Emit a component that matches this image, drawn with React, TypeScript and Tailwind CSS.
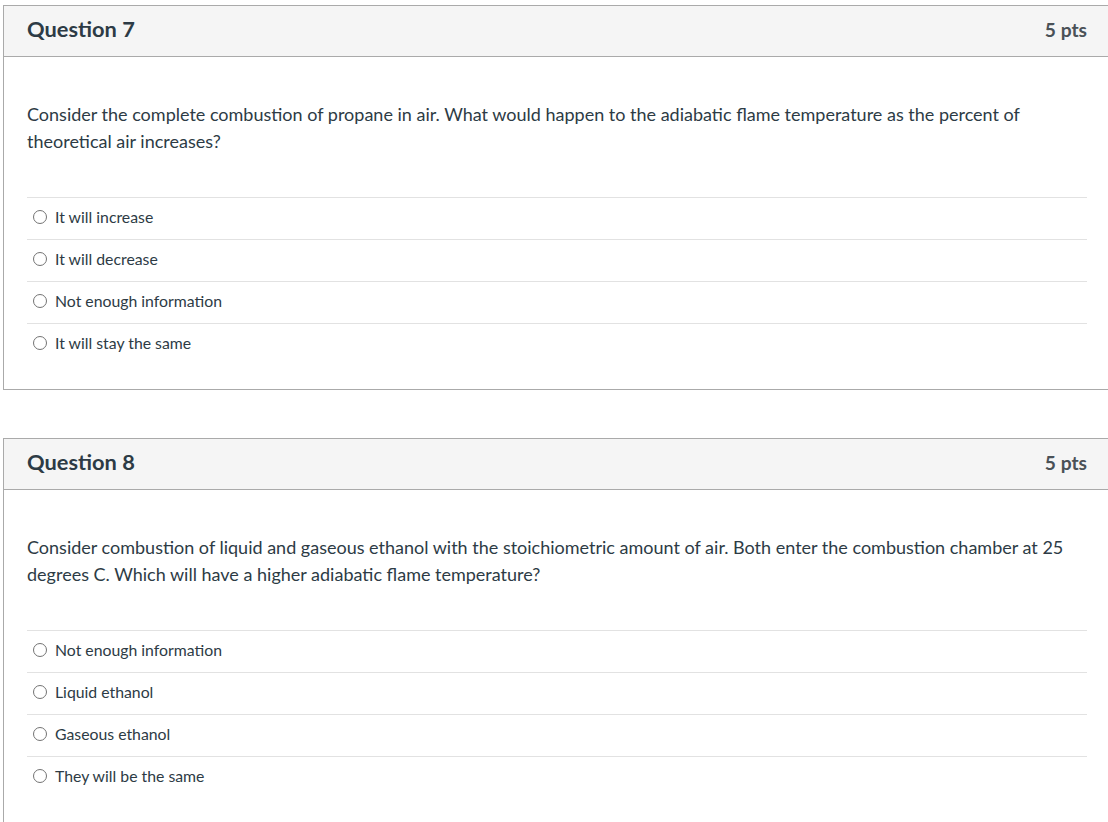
const QUESTIONS = [
  {
    id: 7,
    points: 5,
    text: 'Consider the complete combustion of propane in air. What would happen to the adiabatic flame temperature as the percent of theoretical air increases?',
    answers: ['It will increase', 'It will decrease', 'Not enough information', 'It will stay the same'],
  },
  {
    id: 8,
    points: 5,
    text: 'Consider combustion of liquid and gaseous ethanol with the stoichiometric amount of air. Both enter the combustion chamber at 25 degrees C. Which will have a higher adiabatic flame temperature?',
    answers: ['Not enough information', 'Liquid ethanol', 'Gaseous ethanol', 'They will be the same'],
  },
];

function Radio() {
  return <span className="w-[14px] h-[14px] rounded-full border border-[#737373] bg-white shrink-0" />;
}

export default function App() {
  return (
    <div className="min-h-screen bg-white overflow-hidden font-['Lato',sans-serif] text-[#2d3b45]">
      <div className="pt-[5px] pl-[3px] w-[1111px] flex flex-col gap-[48px]">
        {QUESTIONS.map((q) => (
          <div key={q.id} className="w-[1108px] border border-[#aaaaaa] bg-white">
            {/* Header */}
            <div className="h-[51px] bg-[#f5f5f5] border-b border-[#aaaaaa] px-[23px] pb-[4px] flex items-center justify-between">
              <h2 className="text-[21.8px] font-bold">Question {q.id}</h2>
              <span className="text-[19.2px] font-bold text-[#4a5157] mt-[2px]">{q.points} pts</span>
            </div>

            <div className="px-[23px] pt-[44px] pb-[24px]">
              <p className="text-[18px] leading-[27px]">{q.text}</p>

              <div className="mt-[42px]">
                {q.answers.map((a) => (
                  <div key={a} className="h-[42px] border-t border-[#e2e2e2] flex items-start gap-[8px] pl-[6px] pt-[9px]">
                    <span className="h-[20px] flex items-center">
                      <Radio />
                    </span>
                    <span className="text-[15.8px] leading-[20px]">{a}</span>
                  </div>
                ))}
              </div>
            </div>
          </div>
        ))}
      </div>
    </div>
  );
}
